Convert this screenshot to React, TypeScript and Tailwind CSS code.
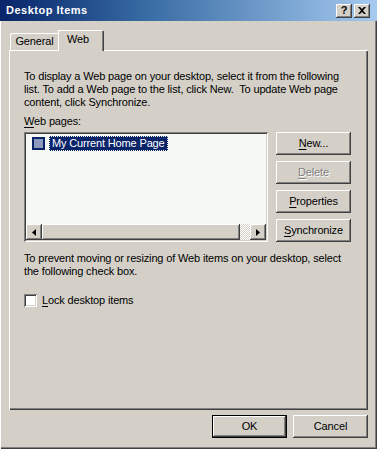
import React from 'react';

const raised =
  'bg-[#d4d0c8] shadow-[inset_-1px_-1px_#404040,inset_1px_1px_#ffffff,inset_-2px_-2px_#808080,inset_2px_2px_#d4d0c8]';
const sunken =
  'shadow-[inset_1px_1px_#808080,inset_-1px_-1px_#ffffff,inset_2px_2px_#404040,inset_-2px_-2px_#d4d0c8]';

function Button({ children, disabled, isDefault }: { children: React.ReactNode; disabled?: boolean; isDefault?: boolean }) {
  return (
    <div
      className={`flex h-[23px] w-[75px] items-center justify-center ${
        isDefault
          ? 'bg-[#d4d0c8] shadow-[inset_0_0_0_1px_#000000,inset_-2px_-2px_#404040,inset_2px_2px_#ffffff,inset_-3px_-3px_#808080]'
          : raised
      } ${disabled ? 'text-[#808080] [text-shadow:1px_1px_0_#ffffff]' : 'text-black'}`}
    >
      {children}
    </div>
  );
}

function U({ children }: { children: React.ReactNode }) {
  return <span className="underline underline-offset-[2px]">{children}</span>;
}

export default function App() {
  return (
    <div
      className="flex h-[449px] w-[377px] flex-col bg-[#d4d0c8] text-[11px] leading-[13px] tracking-[-0.15px] text-black shadow-[inset_1px_0_#ffffff,inset_-1px_-1px_#404040,inset_-2px_-2px_#808080]"
      style={{ fontFamily: '"Liberation Sans", Arial, sans-serif' }}
    >
      {/* Title bar */}
      <div className="flex h-[21px] shrink-0 items-center bg-gradient-to-r from-[#0a246a] via-[#3a6ea5] via-40% to-[#a6caf0] pl-[6px] pr-[7px]">
        <span className="font-bold tracking-[0.5px] text-white">Desktop Items</span>
        <div className="ml-auto flex gap-[2px]">
          <div className={`flex h-[14px] w-[16px] items-center justify-center pb-[1px] font-bold ${raised}`}>?</div>
          <div className={`flex h-[14px] w-[16px] items-center justify-center ${raised}`}>
            <svg width="8" height="7" viewBox="0 0 8 7">
              <path d="M0 0h2l2 2 2-2h2L5 3.5 8 7H6L4 5 2 7H0l3-3.5z" fill="#000" />
            </svg>
          </div>
        </div>
      </div>

      {/* Tabs */}
      <div className="ml-[9px] mt-[9px] flex items-end">
        <div className="ml-[1px] flex h-[17px] w-[48px] items-center justify-center rounded-tl-[2px] pl-[1px] shadow-[inset_1px_1px_#ffffff]">
          General
        </div>
        <div className="relative z-10 -mb-[1px] flex h-[21px] w-[46px] items-start justify-center rounded-tr-[2px] bg-[#d4d0c8] pt-[3px] pr-[6px] shadow-[inset_1px_1px_#ffffff,inset_-1px_0_#404040,inset_-2px_0_#808080]">
          Web
        </div>
      </div>

      {/* Panel */}
      <div className="ml-[9px] flex h-[360px] w-[359px] flex-col pl-[15px] pt-[20px] shadow-[inset_1px_1px_#ffffff,inset_-1px_-1px_#404040,inset_-2px_-2px_#808080]">
        <p className="w-[330px]">
          To display a Web page on your desktop, select it from the following list. To add a Web page to the list, click New.&nbsp; To update Web page content, click Synchronize.
        </p>
        <p className="mt-[6px]">
          <U>W</U>eb pages:
        </p>
        <div className="mt-[4px] flex gap-[8px]">
          <div className={`flex h-[110px] w-[244px] flex-col bg-[#f5f8f3] p-[2px] ${sunken}`}>
            <div className="flex h-[16px] items-center pl-[6px] pt-[2px]">
              <div className="h-[13px] w-[13px] border-2 border-[#0a246a] bg-[#8c9bbd]" />
              <div className="ml-[4px] flex h-[15px] items-center border border-dotted border-[#f0f0f0] bg-[#0a246a] px-[2px] text-white">
                My Current Home Page
              </div>
            </div>
            <div className="mt-auto flex h-[16px]">
              <div className={`flex w-[16px] items-center justify-center ${raised}`}>
                <svg width="4" height="7" viewBox="0 0 4 7">
                  <path d="M4 0v7L0 3.5z" fill="#000" />
                </svg>
              </div>
              <div className={`w-[198px] ${raised}`} />
              <div className="flex-1 bg-[repeating-conic-gradient(#d4d0c8_0_25%,#ffffff_0_50%)] bg-[length:2px_2px]" />
              <div className={`flex w-[16px] items-center justify-center ${raised}`}>
                <svg width="4" height="7" viewBox="0 0 4 7">
                  <path d="M0 0v7L4 3.5z" fill="#000" />
                </svg>
              </div>
            </div>
          </div>
          <div className="flex flex-col gap-[6px]">
            <Button>
              <U>N</U>ew...
            </Button>
            <Button disabled>
              <U>D</U>elete
            </Button>
            <Button>
              <U>P</U>roperties
            </Button>
            <Button>
              <U>S</U>ynchronize
            </Button>
          </div>
        </div>
        <p className="mt-[10px] w-[330px]">
          To prevent moving or resizing of Web items on your desktop, select the following check box.
        </p>
        <div className="mt-[16px] flex items-center">
          <div className={`h-[13px] w-[13px] bg-white ${sunken}`} />
          <span className="ml-[5px]">
            <U>L</U>ock desktop items
          </span>
        </div>
      </div>

      {/* Bottom buttons */}
      <div className="mt-[5px] flex justify-end gap-[6px] pr-[9px]">
        <Button isDefault>OK</Button>
        <Button>Cancel</Button>
      </div>
    </div>
  );
}
